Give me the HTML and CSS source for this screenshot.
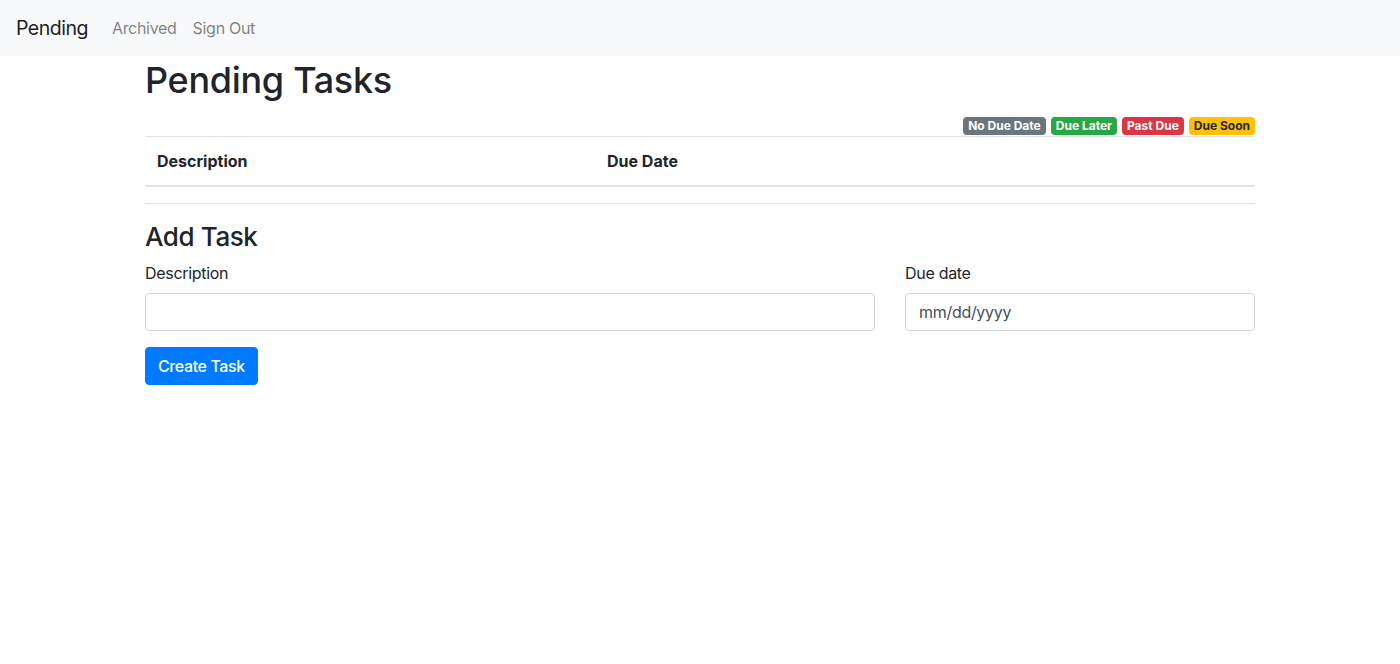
FILE: index.html
```html
<!DOCTYPE html>
<html lang="en">
<head>
<meta charset="utf-8">
<title>Pending Tasks</title>
<link rel="stylesheet" href="styles.css">
</head>
<body>
<nav class="navbar">
  <a class="brand" href="#">Pending</a>
  <ul class="nav">
    <li><a class="nav-link" href="#">Archived</a></li>
    <li><a class="nav-link" href="#">Sign Out</a></li>
  </ul>
</nav>
<main class="container">
  <h1 class="title">Pending Tasks</h1>
  <div class="legend">
    <span class="badge badge-secondary">No Due Date</span>
    <span class="badge badge-success">Due Later</span>
    <span class="badge badge-danger">Past Due</span>
    <span class="badge badge-warning">Due Soon</span>
  </div>
  <table class="table">
    <thead>
      <tr>
        <th class="col-desc">Description</th>
        <th>Due Date</th>
      </tr>
    </thead>
    <tbody></tbody>
  </table>
  <hr class="divider">
  <h3 class="subtitle">Add Task</h3>
  <form class="task-form">
    <div class="row">
      <div class="form-group col-8">
        <label for="desc">Description</label>
        <input id="desc" class="form-control" type="text">
      </div>
      <div class="form-group col-4">
        <label for="due">Due date</label>
        <input id="due" class="form-control" type="text" placeholder="mm/dd/yyyy">
      </div>
    </div>
    <button type="button" class="btn btn-primary">Create Task</button>
  </form>
</main>
</body>
</html>
```
FILE: styles.css
```css
* { box-sizing: border-box; }
html, body { margin: 0; }
body {
  font-family: Inter, "Noto Sans", "Liberation Sans", sans-serif;
  font-size: 16px;
  line-height: 1.5;
  letter-spacing: -0.3px;
  color: #212529;
  background: #fff;
}
a { text-decoration: none; }

.navbar {
  display: flex;
  align-items: center;
  height: 56px;
  padding: 8px 16px;
  background: #f8f9fa;
}
.brand {
  font-size: 19.5px;
  letter-spacing: -0.5px;
  line-height: 30px;
  color: rgba(0,0,0,.9);
  margin-right: 16px;
}
.nav {
  display: flex;
  list-style: none;
  margin: 0;
  padding: 0;
}
.nav-link {
  display: block;
  padding: 8px;
  color: rgba(0,0,0,.5);
}

.container {
  width: 1140px;
  margin: 0 auto;
  padding: 0 15px;
}
.title {
  font-size: 36px;
  font-weight: 500;
  letter-spacing: -0.3px;
  line-height: 48px;
  margin: 0 0 13px;
}
.legend {
  display: flex;
  justify-content: flex-end;
  gap: 5px;
  margin-bottom: 1px;
}
.badge {
  display: inline-block;
  font-size: 12px;
  font-weight: 700;
  letter-spacing: 0;
  line-height: 1;
  padding: 3px 5px;
  border-radius: 4px;
  color: #fff;
  white-space: nowrap;
}
.badge-secondary { background: #6c757d; }
.badge-success { background: #28a745; }
.badge-danger { background: #dc3545; }
.badge-warning { background: #ffc107; color: #212529; }

.table {
  width: 100%;
  border-collapse: collapse;
  margin-bottom: 16px;
}
.table th {
  text-align: left;
  font-weight: 700;
  letter-spacing: 0;
  padding: 12px;
  vertical-align: bottom;
  border-top: 1px solid #dee2e6;
  border-bottom: 2px solid #dee2e6;
}
.table .col-desc { width: 450px; }

.divider {
  margin: 16px 0;
  border: 0;
  border-top: 1px solid rgba(0,0,0,.1);
}
.subtitle {
  font-size: 26px;
  font-weight: 500;
  letter-spacing: -0.4px;
  line-height: 33px;
  margin: 0 0 8px;
}
.row {
  display: flex;
  margin: 0 -15px;
}
.col-8 { width: 66.6667%; padding: 0 15px; }
.col-4 { width: 33.3333%; padding: 0 15px; }
.form-group { margin-bottom: 16px; }
.form-group label {
  display: inline-block;
  margin-bottom: 8px;
}
.form-control {
  display: block;
  width: 100%;
  height: 38px;
  padding: 6px 13px;
  font-family: inherit;
  font-size: 16px;
  letter-spacing: inherit;
  line-height: 1.5;
  color: #495057;
  background: #fff;
  border: 1px solid #ced4da;
  border-radius: 4px;
  outline: none;
}
.form-control::placeholder { color: #495057; opacity: 1; }
.btn {
  display: inline-block;
  font-family: inherit;
  font-size: 16px;
  font-weight: 500;
  letter-spacing: -0.4px;
  line-height: 1.5;
  padding: 6px 12px;
  border: 1px solid transparent;
  border-radius: 4px;
  cursor: pointer;
}
.btn-primary {
  color: #fff;
  background: #007bff;
  border-color: #007bff;
}
```
